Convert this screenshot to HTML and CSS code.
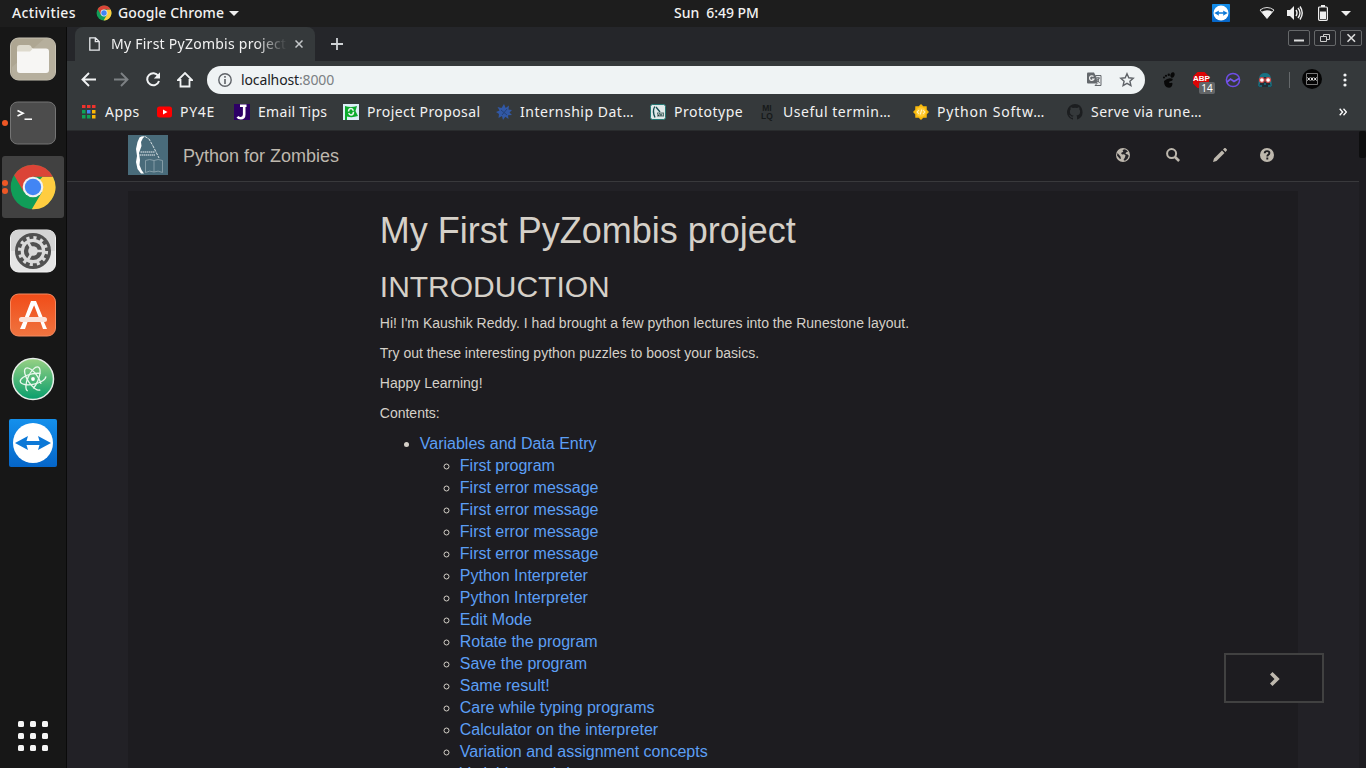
FILE: index.html
```html
<!DOCTYPE html>
<html lang="en">
<head>
<meta charset="utf-8">
<title>My First PyZombis project</title>
<link rel="stylesheet" href="styles.css">
</head>
<body>
<svg class="defs" width="0" height="0">
  <defs>
    <linearGradient id="blue" x1="0" y1="0" x2="0" y2="1"><stop offset="0" stop-color="#1490ec"/><stop offset="1" stop-color="#0565c8"/></linearGradient>
    <linearGradient id="orange" x1="0" y1="0" x2="0" y2="1"><stop offset="0" stop-color="#f14c18"/><stop offset="1" stop-color="#ef7440"/></linearGradient>
    <linearGradient id="green" x1="0" y1="0" x2="0" y2="1"><stop offset="0" stop-color="#98d184"/><stop offset="1" stop-color="#089e6c"/></linearGradient>
    <symbol id="chrome" viewBox="0 0 48 48">
      <circle cx="24" cy="24" r="22.3" fill="#109d58"/>
      <path d="M24 24 33.600 13.800H43.900A22.300 22.300 0 0 1 22.800 46.300L33 29Z" fill="#ffcd40"/>
      <path d="M5.100 12.300A22.300 22.300 0 0 1 43.900 13.800H24L14.500 28.500Z" fill="#db4437"/>
      <circle cx="24" cy="24" r="10.300" fill="#f1f1f1"/><circle cx="24" cy="24" r="8.200" fill="#4285f4"/>
    </symbol>
    <symbol id="teamviewer" viewBox="0 0 48 48">
      <rect width="48" height="48" rx="2" fill="url(#blue)"/><circle cx="24" cy="24" r="20" fill="#fff"/>
      <path d="M6 24l13-7-1.500 5h13L29 17l13 7-13 7 1.500-5h-13L19 31z" fill="#0c78d7"/>
    </symbol>
  </defs>
</svg>
<header class="topbar">
  <span class="activities">Activities</span>
  <div class="app-menu"><svg width="16" height="16"><use href="#chrome"/></svg><span>Google Chrome</span><i class="caret"></i></div>
  <span class="clock">Sun&nbsp; 6:49 PM</span>
  <div class="tray">
    <svg width="18" height="18"><use href="#teamviewer"/></svg>
    <svg class="wifi" width="16" height="14" viewBox="0 0 16 14"><path d="M1 4Q8-1 15 4L8 12.500Z" fill="none" stroke="#ddd"/><path d="M2.500 5.800Q8 2.500 13.500 5.800L8 12.500Z" fill="#f2f2f2"/></svg>
    <svg class="volume" width="16" height="16" viewBox="0 0 16 16"><path d="M0 5h3l4-4v14l-4-4H0z" fill="#eee"/><path d="M9 5q2 3 0 6M11 3q4 5 0 10M13 1.500q4.500 6.500 0 13" fill="none" stroke="#eee" stroke-width="1.400"/></svg>
    <svg class="battery" width="10" height="16" viewBox="0 0 10 16"><path d="M3 0h4v2H3z" fill="#eee"/><rect x=".6" y="2" width="8.800" height="13.300" rx="1" fill="none" stroke="#eee" stroke-width="1.200"/><path d="M2 6.500h6V14H2z" fill="#eee"/></svg>
    <i class="caret"></i>
  </div>
</header>
<div class="desktop">
  <nav class="dock">
    <div class="tile"><svg width="48" height="48" viewBox="0 0 48 48"><rect x="1.500" y="3" width="45" height="42" rx="8" fill="#aea692" stroke="#c6c1b2"/><path d="M3 32 35 4h5q6 1 6 8v25q-1 7-6 7H8q-5-1-5-7Z" fill="#b6af9d"/><path d="M8 13q0-3 3-3h9q2 0 3 3h1v6H8z" fill="#dedacd"/><path d="M8 16.500h13l3-3h13q3 0 3 3V35q0 3-3 3H11q-3 0-3-3z" fill="#f7f6f4"/></svg></div>
    <div class="tile"><i class="run-dot"></i><svg width="48" height="48" viewBox="0 0 48 48"><rect x="1.500" y="3" width="45" height="42" rx="7" fill="#4c4c4c" stroke="#747474"/><path d="M8.500 11.500l5.500 2.700-5.500 2.700" fill="none" stroke="#fff" stroke-width="1.700"/><path d="M15.500 20.200H23" stroke="#fff" stroke-width="1.500"/></svg></div>
    <div class="tile active"><i class="run-dot first"></i><i class="run-dot second"></i><svg width="48" height="48"><use href="#chrome"/></svg></div>
    <div class="tile"><svg width="48" height="48" viewBox="0 0 48 48"><rect x="1.500" y="3" width="45" height="42" rx="8" fill="#e5e5e5" stroke="#f2f2f2"/><path d="M2 24V11q0-8 8-8h28q8 0 8 8v13z" fill="#d4d4d4"/><circle cx="24" cy="24" r="18" fill="#505050"/><circle cx="24" cy="24" r="13.300" fill="none" stroke="#dadada" stroke-width="3.600" stroke-dasharray="3.100 3.864"/><circle cx="24" cy="24" r="10.700" fill="none" stroke="#dadada" stroke-width="3.200"/><circle cx="24" cy="24" r="4.800" fill="#dadada"/><path d="M24 24h11M24 24l-5.500-9.500M24 24l-5.500 9.500" stroke="#dadada" stroke-width="2.600"/></svg></div>
    <div class="tile"><svg width="48" height="48" viewBox="0 0 48 48"><rect x="1.500" y="3" width="45" height="42" rx="8" fill="url(#orange)" stroke="#f58a60"/><path d="M22 10h5l-7.500 17h-4zM23.500 10H27l7 17h-4zM14 31h4.500L16 38h-5zM31.500 31h3.500l3 7h-4z" fill="#fff"/><rect x="10" y="26" width="28" height="5" rx="2.500" fill="#fbe3da"/></svg></div>
    <div class="tile"><svg width="48" height="48" viewBox="0 0 48 48"><circle cx="24" cy="24" r="20.500" fill="url(#green)" stroke="#e7eee9" stroke-width="1.500"/><g fill="none" stroke="#e9f7ed" stroke-width="1.300"><ellipse cx="24" cy="24" rx="13" ry="5.200" transform="rotate(-12 24 24)" stroke-dasharray="53 7"/><ellipse cx="24" cy="24" rx="13" ry="5.200" transform="rotate(56 24 24)" stroke-dasharray="53 7"/><ellipse cx="24" cy="24" rx="13" ry="5.200" transform="rotate(114 24 24)" stroke-dasharray="53 7"/></g><circle cx="24" cy="24" r="1.900" fill="#fff"/></svg></div>
    <div class="tile"><svg width="48" height="48"><use href="#teamviewer"/></svg></div>
    <div class="apps-grid"><i></i><i></i><i></i><i></i><i></i><i></i><i></i><i></i><i></i></div>
  </nav>
  <div class="browser">
    <div class="tabstrip">
      <div class="tab">
        <svg width="11" height="14" viewBox="0 0 11 14"><path d="M.8.800H6.500L10.200 4.500V13.200H.8zM6.300.800V4.700H10.200" fill="none" stroke="#e8eaed" stroke-width="1.300"/></svg>
        <span class="tab-title">My First PyZombis project</span>
        <svg class="close" width="8" height="8" viewBox="0 0 8 8"><path d="M.5.500l7 7m0-7l-7 7" stroke="#c4c7c9" stroke-width="1.500"/></svg>
      </div>
      <svg class="plus" width="12" height="12" viewBox="0 0 12 12"><path d="M6 0v12M0 6h12" stroke="#cfd2d5" stroke-width="1.800"/></svg>
      <div class="window-buttons">
        <span><svg width="20" height="14"><path d="M5 9.500h10" stroke="#ddd" stroke-width="2"/></svg></span>
        <span><svg width="20" height="14"><path d="M8.500 5.500v-2h6v5h-3M5.500 5.500h6v5h-6z" fill="none" stroke="#ccc"/></svg></span>
        <span><svg width="20" height="14"><path d="M6.500 3.200l7.500 7.600m0-7.600l-7.500 7.600" stroke="#ddd" stroke-width="1.600"/></svg></span>
      </div>
    </div>
    <div class="toolbar">
      <svg class="nav-icon" width="16" height="16" viewBox="0 0 16 16"><path d="M15 7.500H2M8 1L1.500 7.500 8 14" fill="none" stroke="#f1f3f4" stroke-width="1.900"/></svg>
      <svg class="nav-icon" width="16" height="16" viewBox="0 0 16 16"><path d="M1 7.500h13M8 1l6.500 6.500L8 14" fill="none" stroke="#7d8184" stroke-width="1.900"/></svg>
      <svg class="nav-icon" width="16" height="16" viewBox="0 0 16 16"><path d="M13.300 4A6 6 0 1 0 14 9" fill="none" stroke="#f1f3f4" stroke-width="2"/><path d="M15 .3v6.200H8.800z" fill="#f1f3f4"/></svg>
      <svg class="nav-icon" width="16" height="16" viewBox="0 0 16 16"><path d="M1 8h2.500v6.500h9V8H15L8 1z" fill="none" stroke="#f1f3f4" stroke-width="1.800"/></svg>
      <div class="omnibox">
        <svg width="14" height="14" viewBox="0 0 14 14"><circle cx="7" cy="7" r="6.200" fill="none" stroke="#5f6368" stroke-width="1.400"/><path d="M7 3v1.700M7 6v5" stroke="#5f6368" stroke-width="1.600"/></svg>
        <span class="url">localhost<em>:8000</em></span>
        <svg class="translate" width="15" height="15" viewBox="0 0 15 15"><path d="M1 .5h6l1.500 3 2.500 8H1q-1 0-1-1v-9q0-1 1-1z" fill="#64686c"/><path d="M8.500 3.500H14v10H8l2-2z" fill="#e7eaeb" stroke="#64686c"/><path d="M6.500 4.500A2.300 2.300 0 1 0 7 7H5" fill="none" stroke="#eee" stroke-width="1.200"/><path d="M9 6h4M11 5v1m1 0q-.5 3-2 4m0-3l2.500 4" fill="none" stroke="#64686c"/></svg>
        <svg width="16" height="16" viewBox="0 0 16 16"><path d="M8 1.800l1.800 4 4.400.4-3.300 3 1 4.300L8 11.300l-3.900 2.200 1-4.300-3.300-3 4.400-.4z" fill="none" stroke="#5f6368" stroke-width="1.400"/></svg>
      </div>
      <div class="extensions">
        <svg width="16" height="16" viewBox="0 0 16 16"><g fill="#080808"><ellipse cx="11.500" cy="3" rx="2" ry="2.800" transform="rotate(20 11.500 3)"/><circle cx="7.800" cy="2.800" r="1.200"/><circle cx="5" cy="3.800" r="1.100"/><circle cx="3" cy="5.500" r="1"/><path d="M3 9Q7.500 5 11.500 6.800 12.500 9 8.500 9.500q-1 1.500 1 1.500 2-.5 2 .8-.5 4-3.500 4Q3 15.500 3 9z"/></g></svg>
        <span class="abp"><svg width="18" height="18" viewBox="0 0 18 18"><path d="M5.500 1h7L17 5.500v7L12.500 17h-7L1 12.500v-7z" fill="#dc0505"/></svg><b>ABP</b><small>14</small></span>
        <svg width="16" height="16" viewBox="0 0 16 16"><circle cx="8" cy="8" r="6.600" fill="none" stroke="#6e4de6" stroke-width="1.500"/><path d="M2 10l3.500-3L9 9.500 14 6.500" fill="none" stroke="#7657ee" stroke-width="1.700"/></svg>
        <svg width="16" height="16" viewBox="0 0 16 16"><path d="M2 6Q3 1 8 1t6 5l1 9H1z" fill="#177384"/><path d="M3.500 6Q8 4 12.500 6l.5 6 2 3H1l2-3z" fill="#202d36"/><path d="M2 14h3m2-2h2m2 2h3" stroke="#177384" stroke-width="1.500"/><circle cx="4.900" cy="8" r="2.400" fill="#fff" stroke="#d34845" stroke-width="1.100"/><circle cx="11.100" cy="8" r="2.400" fill="#fff" stroke="#d34845" stroke-width="1.100"/></svg>
      </div>
      <i class="separator"></i>
      <svg class="profile" width="20" height="20" viewBox="0 0 20 20"><circle cx="10" cy="10" r="10" fill="#050505"/><path d="M4.500 4.500h11v11h-11z" fill="none" stroke="#777"/><path d="M5.500 8.500l2.500 3m0-3l-2.500 3M9 8.500l2 3m0-3l-2 3m3-3l2.500 3m0-3l-2.500 3" stroke="#fff"/></svg>
      <svg class="kebab" width="4" height="14" viewBox="0 0 4 14"><g fill="#f1f3f4"><circle cx="2" cy="2" r="1.600"/><circle cx="2" cy="7" r="1.600"/><circle cx="2" cy="12" r="1.600"/></g></svg>
    </div>
    <div class="bookmarks">
      <a class="bm apps"><svg viewBox="0 0 16 16"><path d="M1 1h3.500v3H1zM6 1h3.500v3H6zM11 1h3.500v3H11z" fill="#f0322c"/><path d="M1 6h3.500v3.500H1zM1 11h3.500v3.500H1zM6 11h3.500v3.500H6z" fill="#0fa358"/><path d="M6 6h3.500v3.500H6z" fill="#4285f4"/><path d="M11 6h3.500v3.500H11zM11 11h3.500v3.500H11z" fill="#fbb806"/></svg><span>Apps</span></a>
      <a class="bm py4e"><svg viewBox="0 0 16 16"><rect x="0" y="2.500" width="15" height="11" rx="2.500" fill="#f00"/><path d="M6 5.500v5L10.500 8z" fill="#fff"/></svg><span>PY4E</span></a>
      <a class="bm email"><svg viewBox="0 0 16 16"><path d="M0 0h16v16H0z" fill="#2d0066"/><path d="M6 1.800h6.500M10.200 2v8.500q0 3.700-3.500 3.700-2.200 0-3.200-1.400" fill="none" stroke="#fff" stroke-width="2.600"/></svg><span>Email Tips</span></a>
      <a class="bm proposal"><svg viewBox="0 0 16 16"><path d="M0 0h16v16H0z" fill="#dceef7"/><path d="M2 2q6 2 12 0l-1.500 5L15 12Q9 14 4 12.500V16H2z" fill="#0bab2c"/><ellipse cx="8" cy="7.700" rx="2.500" ry="3.200" fill="none" stroke="#e7f6ed" stroke-width="1.500" stroke-dasharray="7.500 1.500"/></svg><span>Project Proposal</span></a>
      <a class="bm internship"><svg viewBox="0 0 16 16"><path d="M8 0l1.700 4L13 1.500l-.5 4 3.500.5-2.500 2.500L16 11l-4 .3.500 3.700-3.200-2.200L7 16l-1-4-3.500 2 .5-4-3-2 3.500-1.500L1.500 3l4 1z" fill="#3158a6"/><path d="M5 6l6 5m0-6l-5 6" stroke="#254278"/></svg><span>Internship Dat…</span></a>
      <a class="bm prototype"><svg viewBox="0 0 16 16"><rect x=".5" y=".5" width="15" height="15" rx="2" fill="#dfe8e8" stroke="#237672"/><path d="M4.800 2.500Q2 7 5 13.500M6 3l4 5" fill="none" stroke="#164d51" stroke-width="1.300"/><path d="M7 8.500h7v4H7z" fill="#52716f"/><path d="M7.500 11.500l1-2 1 2m1-2h1m1 0v2" stroke="#e6eded" stroke-width=".7"/></svg><span>Prototype</span></a>
      <a class="bm terms"><b class="milq"><span>MI</span><span>LQ</span></b><span>Useful termin…</span></a>
      <a class="bm software"><svg viewBox="0 0 16 16"><path d="M8 0l2.300 2.200 3.400.1.100 3.400L16 8l-2.200 2.300-.1 3.400-3.400.1L8 16l-2.300-2.200-3.400-.1-.1-3.400L0 8l2.200-2.300.1-3.400 3.400-.1z" fill="#f8b90c"/><circle cx="8" cy="8" r="4.800" fill="#ffcb35"/><path d="M6 6L4.200 8 6 10M10 6l1.800 2L10 10M8.800 5.500l-1.600 5" fill="none" stroke="#fff2bd" stroke-width="1.100"/></svg><span>Python Softw…</span></a>
      <a class="bm serve"><svg viewBox="0 0 16 16"><path d="M8 0a8 8 0 0 0-2.500 15.600c.4.100.5-.2.500-.400v-1.500c-2.200.5-2.700-1-2.700-1-.4-.9-.9-1.200-.9-1.200-.7-.5.100-.5.100-.5.800.1 1.200.8 1.200.8.700 1.200 1.900.9 2.300.7.100-.5.300-.9.500-1.100-1.800-.2-3.600-.9-3.600-4 0-.9.300-1.600.8-2.100-.1-.2-.4-1 .1-2.100 0 0 .7-.2 2.200.8a7.600 7.600 0 0 1 4 0c1.500-1 2.200-.8 2.200-.8.400 1.100.2 1.900.1 2.100.5.600.8 1.300.8 2.100 0 3.100-1.900 3.700-3.700 3.900.3.300.6.800.6 1.500v2.200c0 .2.100.5.500.4A8 8 0 0 0 8 0z" fill="#1c1e20"/></svg><span>Serve via rune…</span></a>
      <svg class="more" width="8" height="8" viewBox="0 0 8 8"><path d="M.7.800L3.600 4 .7 7.200M4.500.800L7.400 4 4.500 7.200" fill="none" stroke="#fff" stroke-width="1.300"/></svg>
    </div>
    <div class="page">
      <div class="navbar">
        <svg width="40" height="40" viewBox="0 0 40 40"><path d="M0 0h40v40H0z" fill="#496b7a"/><path d="M11.500 2.500q3-2 5.500-1l-2 1.500-2 4 .5 4-2.500 7 1 7-.5 5 2 5 2.500 3.500h-3L9.500 34 8 27l1-6-1-7 1.500-7z" fill="#fff"/><path d="M17 1.500l4 2.500 4 7 3 6 3 6" fill="none" stroke="#d5dfe2" stroke-dasharray="3 1"/><path d="M17.500 25.500v12q4-2.500 8.500-.5 4-2 8.500.5v-12q-4.500-2-8.500 0-4.500-2-8.500 0zM26 25v12" fill="none" stroke="#8ba2ab" stroke-width=".9"/><path d="M12.500 17h14M11.500 20h16" stroke="#b5c4ca" stroke-dasharray="2 .5 1 .5" stroke-width="1.600"/></svg>
        <span class="brand">Python for Zombies</span>
        <div class="page-tools">
          <svg width="14" height="14" viewBox="0 0 14 14"><circle cx="7" cy="7" r="7" fill="#beb8ae"/><path d="M8 1.200L6.500 2.500l.8 1.300L5 5l1 1.500 2-.3 1.500 1-.5 2L7.500 12l1.500.8 2.500-2 1.300-3-1.500-1.500L9.500 6l.5-1.500L12 3.500Q10 1.200 8 1.200zM1.500 5L1 7.500l2.500 3L5 11 4.500 8.500z" fill="#252428"/></svg>
          <svg width="14" height="14" viewBox="0 0 14 14"><circle cx="5.600" cy="5.600" r="4.500" fill="none" stroke="#beb8ae" stroke-width="2"/><path d="M8.800 8.800l4.300 4.200" stroke="#beb8ae" stroke-width="2.600"/></svg>
          <svg width="14" height="14" viewBox="0 0 14 14"><path d="M0 14l1-3.500L9 2.500 11.500 5l-8 8zM10 1.500L11.500 0q.7-.2 1.200.2l1 1q.5.600.1 1.200L12.500 4z" fill="#beb8ae"/></svg>
          <svg width="14" height="14" viewBox="0 0 14 14"><circle cx="7" cy="7" r="7" fill="#beb8ae"/><path d="M4.700 5.300q0-2.200 2.400-2.200 2.300 0 2.300 1.900 0 1.200-1.200 1.800-.9.500-.9 1.700M7.300 9.500v1.900" fill="none" stroke="#1e1d21" stroke-width="1.900"/></svg>
        </div>
      </div>
      <main class="container">
        <article>
          <h1>My First PyZombis project</h1>
          <h2>INTRODUCTION</h2>
          <p>Hi! I'm Kaushik Reddy. I had brought a few python lectures into the Runestone layout.</p>
          <p>Try out these interesting python puzzles to boost your basics.</p>
          <p>Happy Learning!</p>
          <p>Contents:</p>
          <ul>
            <li><a>Variables and Data Entry</a>
              <ul>
                <li><a>First program</a></li>
                <li><a>First error message</a></li>
                <li><a>First error message</a></li>
                <li><a>First error message</a></li>
                <li><a>First error message</a></li>
                <li><a>Python Interpreter</a></li>
                <li><a>Python Interpreter</a></li>
                <li><a>Edit Mode</a></li>
                <li><a>Rotate the program</a></li>
                <li><a>Save the program</a></li>
                <li><a>Same result!</a></li>
                <li><a>Care while typing programs</a></li>
                <li><a>Calculator on the interpreter</a></li>
                <li><a>Variation and assignment concepts</a></li>
                <li><a>Variables and data</a></li>
              </ul>
            </li>
          </ul>
        </article>
      </main>
      <div class="scrollbar"><i></i></div>
      <div class="next"><svg width="10" height="14" viewBox="0 0 10 14"><path d="M0 2.500L2.500 0 9.700 7 2.500 14 0 11.500 4.500 7z" fill="#beb8ae"/></svg></div>
    </div>
  </div>
</div>
</body>
</html>
```
FILE: styles.css
```css
* { box-sizing: border-box; }
body { margin: 0; width: 1366px; height: 768px; overflow: hidden; background: #171717; color: #f2f2f2; font: 14px/20px "Noto Sans", "Open Sans", sans-serif; }
svg { display: block; flex: none; }
.defs { position: absolute; }
.topbar { height: 27px; background: #1d1d1d; display: flex; align-items: center; padding: 0 0 1px 12px; font-weight: 500; white-space: nowrap; }
.activities { width: 84px; letter-spacing: .35px; }
.app-menu { display: flex; align-items: center; }
.app-menu span { margin-left: 6px; width: 107px; letter-spacing: .12px; }
.caret { border: 5px solid transparent; border-top-color: #eee; border-bottom: 0; margin-left: 4px; }
.clock { margin-left: 435px; width: 86px; letter-spacing: -.05px; }
.tray { display: flex; align-items: center; margin-left: auto; padding-right: 15px; }
.wifi { margin-left: 29px; }
.volume { margin-left: 12px; }
.battery { margin-left: 15px; }
.tray .caret { margin-left: 13px; }
.desktop { display: flex; height: 741px; }
.dock { width: 67px; flex: none; background: #171717; border-right: 1px solid #0a0a0a; display: flex; flex-direction: column; align-items: center; gap: 2px; padding: 1px 0 15px; }
.tile { position: relative; width: 62px; height: 62px; display: flex; align-items: center; justify-content: center; border-radius: 3px; }
.active { background: #414141; }
.run-dot { position: absolute; left: 0; top: 28px; width: 6px; height: 6px; border-radius: 50%; background: #ee5725; }
.first { top: 24px; }
.second { top: 32px; }
.apps-grid { display: grid; grid-template-columns: repeat(3, 6px); gap: 6px; margin-top: auto; margin-bottom: 2px; }
.apps-grid i { height: 6px; background: #f5f5f5; border-radius: 1.5px; }
.browser { flex: 1; min-width: 0; background: #35393b; display: flex; flex-direction: column; }
.tabstrip { height: 34px; background: #25262a; display: flex; align-items: center; padding-left: 8px; flex: none; }
.tab { width: 240px; height: 34px; border-radius: 8px 8px 0 0; background: #35393b; display: flex; align-items: center; padding-left: 14px; }
.tab-title { width: 175px; margin-left: 11px; overflow: hidden; white-space: nowrap; letter-spacing: .25px; mask-image: linear-gradient(90deg, #000 145px, transparent 176px); }
.close { margin-left: 9px; }
.plus { margin-left: 16px; }
.window-buttons { display: flex; gap: 4px; margin: -12px 4px 0 auto; }
.window-buttons span { width: 22px; height: 16px; border: 1px solid #66686a; border-radius: 2px; }
.toolbar { height: 37px; padding-left: 14px; display: flex; align-items: center; flex: none; }
.nav-icon { margin-right: 16px; }
.omnibox { width: 938px; height: 28px; border-radius: 14px; background: #eff3f4; margin-left: -2px; padding: 0 10px 0 11px; display: flex; align-items: center; color: #202124; }
.url { margin-left: 9px; letter-spacing: -.13px; }
.url em { color: #7b8083; font-style: normal; }
.translate { margin: 0 17px 0 auto; }
.extensions { display: flex; align-items: center; gap: 16px; margin-left: 16px; }
.abp { position: relative; width: 18px; height: 18px; margin: 0 -1px 0 -1px; }
.abp b { position: absolute; left: 1px; top: 4px; font: 900 8px/8px "Liberation Sans", sans-serif; color: #fff; }
.abp small { position: absolute; left: 7px; top: 11px; width: 16px; height: 12px; border-radius: 2px; background: #626567; color: #fff; font: 10px/12px "Noto Sans", sans-serif; text-align: center; }
.separator { width: 1px; height: 16px; background: #65696b; margin-left: 16px; }
.profile { margin: 0 0 2px 12px; }
.kebab { margin-left: 21px; }
.bookmarks { height: 33px; padding: 0 19px 4px 14px; display: flex; align-items: center; border-bottom: 1px solid #292b2d; flex: none; }
.bm { display: flex; align-items: center; gap: 8px; width: 154px; white-space: nowrap; letter-spacing: .4px; }
.bm svg { width: 16px; height: 16px; }
.apps { width: 76px; letter-spacing: .45px; }
.py4e { width: 77px; gap: 7px; letter-spacing: .7px; }
.email { width: 109px; letter-spacing: .3px; }
.proposal { width: 153px; }
.internship, .terms { letter-spacing: .52px; }
.software { letter-spacing: .8px; }
.prototype { width: 109px; letter-spacing: .5px; }
.milq { width: 16px; display: flex; flex-direction: column; align-items: center; font: 700 8.5px/8px "Liberation Sans", sans-serif; letter-spacing: 0; color: #17191a; }
.serve { width: 140px; letter-spacing: .45px; }
.more { margin-left: auto; }
.page { position: relative; flex: 1; min-height: 0; overflow: hidden; background: #222126; color: #d5d0c8; font: 14px/20px "Liberation Sans", Arial, sans-serif; }
.navbar { height: 51px; background: #1e1d21; border-bottom: 1px solid #39393c; display: flex; align-items: center; padding: 0 84px 2px 61px; }
.brand { margin: 2px 0 0 15px; font-size: 18px; color: #beb8ae; }
.page-tools { display: flex; margin-left: auto; gap: 33px; padding-right: 8px; }
.page-tools svg:first-child { margin-right: 3px; }
.container { width: 1170px; margin: 9px 0 0 61px; padding: 1px 0 0 251.800px; background: #1d1c20; height: 590px; }
h1, h2 { font-weight: 400; line-height: 1.1; margin: 20px 0 10px; }
h1 { font-size: 36px; margin-top: 19px; }
h2 { font-size: 30px; margin-top: 19px; }
p { margin: 0 0 10px; }
ul { margin: 0; padding-left: 40px; font-size: 16px; line-height: 22px; }
li a { color: #5c9ff5; }
.scrollbar { position: absolute; right: 0; top: 0; width: 7px; height: 100%; background: #1e1d21; }
.scrollbar i { display: block; height: 27px; background: #0e0e0f; border-radius: 2px; }
.next { position: absolute; left: 1157px; top: 522px; width: 100px; height: 50px; padding: 2px 0 0 2px; border: 2px solid #414141; background: #1d1c20; display: flex; align-items: center; justify-content: center; }
```
